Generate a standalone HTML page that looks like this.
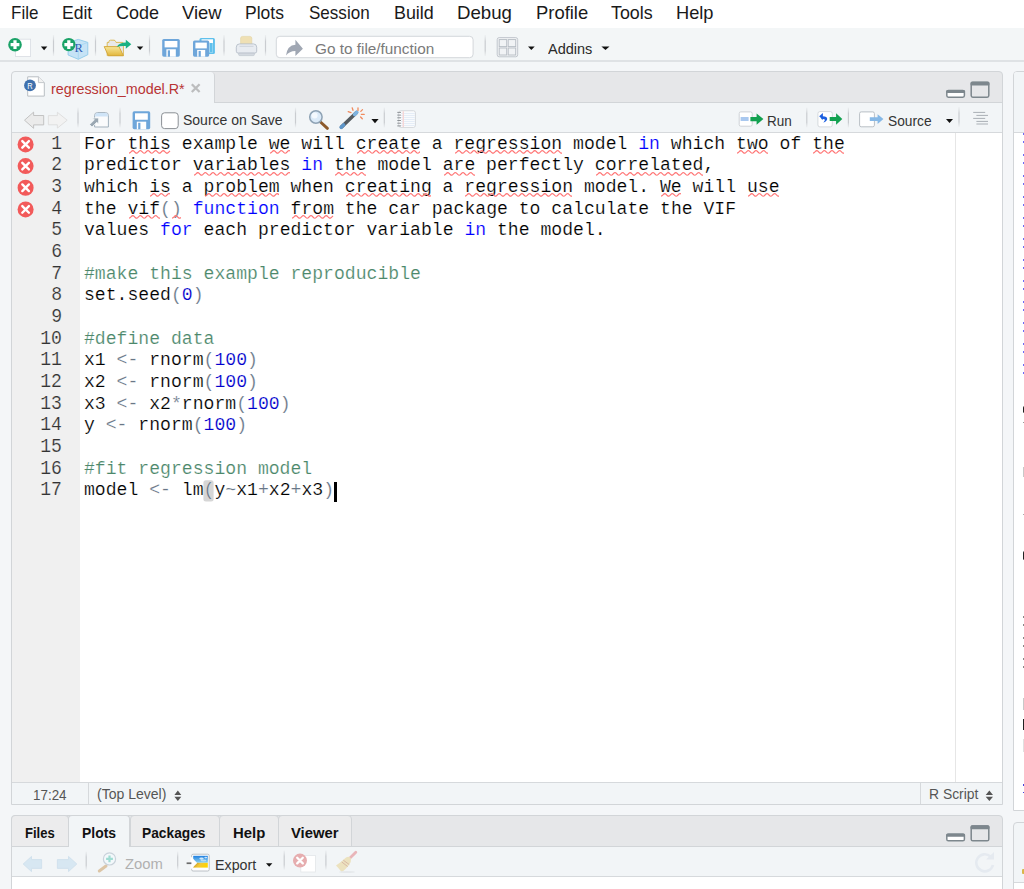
<!DOCTYPE html>
<html><head><meta charset="utf-8">
<style>
*{box-sizing:border-box;margin:0;padding:0}
html,body{width:1024px;height:889px;overflow:hidden;background:#f4f6f8;font-family:"Liberation Sans", sans-serif}
.a{position:absolute}
.t{position:absolute;white-space:pre;line-height:1.2}
.ln{position:absolute;left:84.0px;font-family:"Liberation Mono", monospace;font-size:18.12px;line-height:21.675px;height:21.675px;white-space:pre;color:#000;-webkit-text-stroke:0.18px #fff}
.num{position:absolute;left:20px;width:42px;text-align:right;font-family:"Liberation Mono", monospace;font-size:18.12px;line-height:21.675px;color:#333;transform:scaleY(1.1);-webkit-text-stroke:0.18px #f0f0f0;}
.k{color:#0000ff} .n{color:#0000cd} .c{color:#4c886b} .p{color:#687687}
.sq{position:absolute}
.err{position:absolute}
.sep{position:absolute;width:1px;background:#d3d6d9}
.bd{position:absolute;left:1022.5px;width:2px;height:2px;border-radius:1px;background:#3a3af5}
svg{position:absolute}
</style></head><body>
<!-- menu bar -->
<div class="a" style="left:0;top:0;width:1024px;height:28px;background:#fff"></div>
<div class="t" style="left:11.30px;top:2.48px;font-size:18.4px;color:#1a1a1a;font-weight:normal;transform:scaleX(0.9249);transform-origin:0 0;">File</div><div class="t" style="left:62.20px;top:2.48px;font-size:18.4px;color:#1a1a1a;font-weight:normal;transform:scaleX(0.9546);transform-origin:0 0;">Edit</div><div class="t" style="left:116.00px;top:2.48px;font-size:18.4px;color:#1a1a1a;font-weight:normal;transform:scaleX(0.9778);transform-origin:0 0;">Code</div><div class="t" style="left:181.80px;top:2.48px;font-size:18.4px;color:#1a1a1a;font-weight:normal;transform:scaleX(1.0035);transform-origin:0 0;">View</div><div class="t" style="left:245.00px;top:2.48px;font-size:18.4px;color:#1a1a1a;font-weight:normal;transform:scaleX(0.9526);transform-origin:0 0;">Plots</div><div class="t" style="left:309.00px;top:2.48px;font-size:18.4px;color:#1a1a1a;font-weight:normal;transform:scaleX(0.9267);transform-origin:0 0;">Session</div><div class="t" style="left:393.50px;top:2.48px;font-size:18.4px;color:#1a1a1a;font-weight:normal;transform:scaleX(0.9722);transform-origin:0 0;">Build</div><div class="t" style="left:457.00px;top:2.48px;font-size:18.4px;color:#1a1a1a;font-weight:normal;transform:scaleX(1.0150);transform-origin:0 0;">Debug</div><div class="t" style="left:535.80px;top:2.48px;font-size:18.4px;color:#1a1a1a;font-weight:normal;transform:scaleX(1.0007);transform-origin:0 0;">Profile</div><div class="t" style="left:611.00px;top:2.48px;font-size:18.4px;color:#1a1a1a;font-weight:normal;transform:scaleX(0.9706);transform-origin:0 0;">Tools</div><div class="t" style="left:676.00px;top:2.48px;font-size:18.4px;color:#1a1a1a;font-weight:normal;transform:scaleX(0.9917);transform-origin:0 0;">Help</div>
<!-- main toolbar -->
<div class="a" style="left:0;top:28px;width:1024px;height:32px;background:#f3f6f7"></div>
<div class="a" style="left:0;top:60px;width:1024px;height:2px;background:#dfe2e5"></div>

<!-- editor pane -->
<div class="a" style="left:11px;top:71px;width:992px;height:734px;border:1px solid #d2d5d8;border-radius:4px 4px 0 0;background:#e6e7e9;overflow:hidden">
</div>
<!-- active tab -->
<div class="a" style="left:12px;top:72px;width:203px;height:31px;background:#f2f5f7;border-right:1px solid #d2d5d8;border-radius:4px 4px 0 0"></div>
<div class="a" style="left:215px;top:102px;width:787px;height:1px;background:#d2d5d8"></div>
<!-- editor toolbar -->
<div class="a" style="left:12px;top:103px;width:990px;height:29px;background:#f2f5f7"></div>
<div class="a" style="left:12px;top:132px;width:990px;height:1px;background:#d6d9dc"></div>
<!-- gutter & code -->
<div class="a" style="left:12px;top:133px;width:68px;height:649px;background:#f0f0f0"></div>
<div class="a" style="left:80px;top:133px;width:922px;height:649px;background:#fff"></div>
<div class="a" style="left:955px;top:133px;width:1px;height:649px;background:#e6e6e6"></div>
<!-- status bar -->
<div class="a" style="left:12px;top:782px;width:990px;height:1px;background:#d6d9dc"></div>
<div class="a" style="left:12px;top:783px;width:990px;height:21px;background:#f2f5f7"></div>
<div class="a" style="left:88px;top:783px;width:1px;height:21px;background:#d6d9dc"></div>
<div class="a" style="left:920px;top:783px;width:1px;height:21px;background:#d6d9dc"></div>

<!-- right pane -->
<div class="a" style="left:1013px;top:71px;width:20px;height:740px;border:1px solid #d2d5d8;border-radius:4px 0 0 0;background:#fff"></div>
<div class="a" style="left:1014px;top:72px;width:12px;height:60px;background:#f2f5f7;border-radius:3px 0 0 0"></div>
<div class="a" style="left:1014px;top:132px;width:12px;height:1px;background:#d6d9dc"></div>
<div class="a" style="left:1022.5px;top:406.4px;width:3px;height:7px;background:#222;border-radius:2px"></div>
<div class="a" style="left:1022.5px;top:422px;width:3px;height:1.3px;background:#999"></div>
<div class="a" style="left:1022.8px;top:466.6px;width:2px;height:10px;background:#c8c8c8"></div>
<div class="a" style="left:1022.5px;top:514px;width:3px;height:1.3px;background:#aaa"></div>
<div class="a" style="left:1022.5px;top:550.6px;width:3px;height:9.6px;background:#222;border-radius:2px"></div>
<div class="a" style="left:1023px;top:616.3px;width:2px;height:1.5px;background:#888"></div>
<div class="a" style="left:1023px;top:624px;width:2px;height:1.5px;background:#888"></div>
<div class="a" style="left:1023px;top:637px;width:2px;height:1.5px;background:#888"></div>
<div class="a" style="left:1023px;top:645.4px;width:2px;height:1.5px;background:#888"></div>
<div class="a" style="left:1023px;top:658px;width:2px;height:1.5px;background:#888"></div>
<div class="a" style="left:1023px;top:666.3px;width:2px;height:1.5px;background:#888"></div>
<div class="a" style="left:1022.8px;top:698px;width:2px;height:11.6px;background:#c8c8c8"></div>
<div class="a" style="left:1022.5px;top:719.1px;width:3px;height:11.3px;background:#222"></div>
<div class="a" style="left:1022.8px;top:739.4px;width:2px;height:12.3px;background:#e0e0e0"></div>
<div class="a" style="left:1022.5px;top:784.3px;width:3px;height:1.6px;background:#4444dd"></div>
<div class="a" style="left:1022.5px;top:791.5px;width:3px;height:1.6px;background:#4444dd"></div>
<div class="a" style="left:1013px;top:822px;width:20px;height:80px;border:1px solid #d2d5d8;border-radius:4px 0 0 0;background:#f2f5f7"></div>
<div class="a" style="left:1014px;top:882px;width:12px;height:1px;background:#d6d9dc"></div>
<div class="a" style="left:1014px;top:883px;width:12px;height:10px;background:#fff"></div>
<div class="a" style="left:1022px;top:869px;width:3px;height:4.5px;background:#d9b54a;border-radius:1px"></div>

<!-- bottom pane -->
<div class="a" style="left:11px;top:815px;width:992px;height:90px;border:1px solid #d2d5d8;border-radius:4px 4px 0 0;background:#e6e7e9"></div>
<div class="a" style="left:12px;top:846px;width:990px;height:30px;background:#f2f5f7"></div>
<div class="a" style="left:11px;top:815px;width:58px;height:32px;background:#ececed;border:1px solid #d2d5d8;border-radius:4px 4px 0 0"></div>
<div class="a" style="left:130px;top:815px;width:90px;height:32px;background:#ececed;border:1px solid #d2d5d8;border-radius:4px 4px 0 0"></div>
<div class="a" style="left:219px;top:815px;width:60px;height:32px;background:#ececed;border:1px solid #d2d5d8;border-radius:4px 4px 0 0"></div>
<div class="a" style="left:278px;top:815px;width:74px;height:32px;background:#ececed;border:1px solid #d2d5d8;border-radius:4px 4px 0 0"></div>
<div class="a" style="left:68px;top:815px;width:62px;height:32px;background:#f2f5f7;border:1px solid #d2d5d8;border-bottom:none;border-radius:4px 4px 0 0"></div>
<div class="a" style="left:12px;top:846px;width:56px;height:1px;background:#d2d5d8"></div>
<div class="a" style="left:130px;top:846px;width:872px;height:1px;background:#d2d5d8"></div>
<div class="a" style="left:12px;top:876px;width:990px;height:1px;background:#d6d9dc"></div>
<div class="a" style="left:12px;top:877px;width:990px;height:20px;background:#fff"></div>

<!-- texts -->
<svg style="left:0;top:0" width="1024" height="889" viewBox="0 0 1024 889"><defs><linearGradient id="sg" x1="0" y1="0" x2="0" y2="1"><stop offset="0" stop-color="#d4d7da" stop-opacity="0.2"/><stop offset="0.3" stop-color="#c9ccd0"/><stop offset="0.75" stop-color="#c9ccd0"/><stop offset="1" stop-color="#d4d7da" stop-opacity="0.2"/></linearGradient></defs><rect x="15.5" y="39.2" width="15.1" height="17.2" fill="#fff" stroke="#d9dde3" stroke-width="0.8"/><circle cx="15.0" cy="44.7" r="6.8" fill="#1aa267"/><path d="M10.6 44.7H19.4M15.0 40.300000000000004V49.1" stroke="#fff" stroke-width="3.2"/><path d="M40.9 46.6H47.3L44.099999999999994 50.2Z" fill="#111"/><rect x="52.9" y="35" width="1.2" height="21" fill="url(#sg)"/><path d="M78.3 39.4L87.8 42.4V54.7L78.3 59.3L68.1 55V42.5Z" fill="#c6e3f6" stroke="#8fcbea" stroke-width="0.9"/><path d="M68.1 42.5L78.3 46L87.8 42.4M78.3 46V59.3" fill="none" stroke="#9fd3ef" stroke-width="0.7"/><text x="74.6" y="51.9" font-family="Liberation Serif" font-size="12.5" fill="#2f5db3">R</text><circle cx="68.8" cy="44.6" r="6.7" fill="#1aa267"/><path d="M64.39999999999999 44.6H73.2M68.8 40.2V49.0" stroke="#fff" stroke-width="3.2"/><rect x="94.9" y="35" width="1.2" height="21" fill="url(#sg)"/><path d="M107.2 55.6V42.4H109V41.5Q109 40.2 110.5 40.2H114Q115.2 40.2 115.5 41.4L116 42.4H122.3Q123.4 42.4 123.4 43.5V55.6Z" fill="#e9e9e9" stroke="#d8b44a" stroke-width="0.9"/><defs><linearGradient id="fg" x1="0" y1="0" x2="0" y2="1"><stop offset="0" stop-color="#f7e79a"/><stop offset="1" stop-color="#e2b63c"/></linearGradient></defs><path d="M104.2 46.6H119L123.4 55.7H108.3Z" fill="url(#fg)" stroke="#d3a535" stroke-width="0.9" stroke-linejoin="round"/><path d="M116.8 46.8Q119 42.6 125.8 42.4V39.8L131.3 44.2L125.8 48.8V46.1Q120.5 45.8 116.8 46.8Z" fill="#19b183"/><path d="M136.8 46.6H143.3L140.05 50.1Z" fill="#111"/><rect x="148.9" y="35" width="1.2" height="21" fill="url(#sg)"/><rect x="162.2" y="39.0" width="17.600000000000023" height="17.700000000000003" rx="1.6" fill="#6ea6da"/><rect x="164.6" y="41.0" width="12.800000000000022" height="6.372000000000001" fill="#fff"/><rect x="166.39999999999998" y="49.266000000000005" width="9.400000000000023" height="7.434000000000001" fill="#fff"/><rect x="167.79999999999998" y="50.328" width="2.2" height="6.372000000000001" fill="#6ea6da"/><rect x="199.5" y="37.9" width="15.4" height="16.1" rx="1.5" fill="#5fc0ec"/><rect x="201.5" y="39.3" width="11.5" height="13" fill="#fff"/><rect x="209.5" y="43" width="3.2" height="9" fill="#5fc0ec"/><rect x="193.0" y="40.6" width="16.19999999999999" height="16.1" rx="1.6" fill="#6ea6da"/><rect x="195.4" y="42.6" width="11.399999999999988" height="5.796" fill="#fff"/><rect x="197.2" y="49.938" width="7.999999999999989" height="6.7620000000000005" fill="#fff"/><rect x="198.6" y="50.904" width="2.2" height="5.796" fill="#6ea6da"/><rect x="223.4" y="35" width="1.2" height="21" fill="url(#sg)"/><path d="M240.6 47V38.3Q240.6 36.4 242.5 36.4H249.9Q251.8 36.4 251.8 38.3V47Z" fill="#efe0b4" stroke="#e3d3a2" stroke-width="0.6"/><path d="M236.3 51.2V47.2Q236.3 43.9 239.6 43.9H253.4Q256.7 43.9 256.7 47.2V51.2Q256.7 53.1 254.8 53.1H238.2Q236.3 53.1 236.3 51.2Z" fill="#e8ecf1" stroke="#b5bec8" stroke-width="0.9"/><path d="M239.5 46.3H253.5" stroke="#c9d0d8" stroke-width="0.9"/><path d="M238.6 53.2H254.4V54.5Q254.4 55.6 253.3 55.6H239.7Q238.6 55.6 238.6 54.5Z" fill="#d3d9e0" stroke="#b9c1ca" stroke-width="0.6"/><rect x="264.9" y="35" width="1.2" height="21" fill="url(#sg)"/><rect x="276.3" y="36.3" width="196.8" height="21.4" rx="3.5" fill="#fff" stroke="#d3d7db" stroke-width="1"/><path d="M286 55.6Q287.3 45.3 295.4 44.8V39.7L302.9 48.65L295.4 56.1V51Q289.6 50.9 286 55.6Z" fill="#a0a7b3"/><rect x="484.59999999999997" y="35" width="1.2" height="21" fill="url(#sg)"/><rect x="497.2" y="37.6" width="20.5" height="19.2" rx="2" fill="#f1f3f5" stroke="#bcc2c8" stroke-width="0.9"/><rect x="499.2" y="39.6" width="7.5" height="7" fill="none" stroke="#b6bcc3" stroke-width="0.9"/><rect x="508.2" y="39.6" width="7.5" height="7" fill="none" stroke="#b6bcc3" stroke-width="0.9"/><rect x="499.2" y="48" width="7.5" height="7" fill="none" stroke="#b6bcc3" stroke-width="0.9"/><rect x="508.2" y="48" width="7.5" height="7" fill="none" stroke="#b6bcc3" stroke-width="0.9"/><path d="M528 46.6H534.7L531.35 50.1Z" fill="#111"/><path d="M601.4 46.6H609.5L605.45 50.1Z" fill="#111"/><path d="M27.7 76.8H38.4L44.3 82.6V96.1H27.7Z" fill="#fff" stroke="#b9bec3" stroke-width="1"/><path d="M38.4 76.8V82.6H44.3" fill="#f1f1f1" stroke="#c4c8cc" stroke-width="1"/><circle cx="30" cy="85.4" r="5.9" fill="#3f70ad"/><text x="27.3" y="88.8" font-family="Liberation Sans" font-size="8.8" fill="#fff" transform="translate(27.3 0) scale(0.85 1) translate(-27.3 0)">R</text><path d="M191.8 84.2L199.6 92M199.6 84.2L191.8 92" stroke="#bcbdbe" stroke-width="2.3"/><rect x="946.8" y="90.6" width="17.6" height="6.6" rx="1.6" fill="#fff" stroke="#7d878d" stroke-width="1.5"/><rect x="946.1" y="89.89999999999999" width="19" height="3.2" rx="1.5" fill="#7d878d"/><rect x="971.2" y="82.39999999999999" width="17.6" height="14.8" rx="1.6" fill="none" stroke="#7d878d" stroke-width="1.5"/><rect x="970.5" y="81.6" width="19" height="4" rx="1.5" fill="#7d878d"/><path d="M24.5 120.2L33.6 112.10000000000001V115.5H43.7V124.9H33.6V128.3Z" fill="#ebebeb" stroke="#bdbdbd" stroke-width="0.9" stroke-linejoin="round"/><path d="M67.2 120.2L57.4 112.3V115.60000000000001H48.4V124.8H57.4V128.1Z" fill="#f2f2f2" stroke="#dcdcdc" stroke-width="0.9" stroke-linejoin="round"/><rect x="77.4" y="107.5" width="1.2" height="20.0" fill="url(#sg)"/><path d="M94.6 127V115.5Q94.6 112.6 97.5 112.6H105.5Q108.4 112.6 108.4 115.5V127Z" fill="#fafbfc" stroke="#a3b1bd" stroke-width="1"/><path d="M95.1 116.6V115.5Q95.1 113.1 97.5 113.1H105.5Q107.9 113.1 107.9 115.5V116.6Z" fill="#cfe4f7"/><path d="M89.6 124.6L94.4 119.8L92.6 118H98.6V124L96.8 122.2L92 127Z" fill="#9aa7b2" stroke="#f4f7f9" stroke-width="0.8" stroke-linejoin="round"/><rect x="119.4" y="107.5" width="1.2" height="20.0" fill="url(#sg)"/><rect x="132.6" y="111.3" width="17.599999999999994" height="17.89999999999999" rx="1.6" fill="#6ea6da"/><rect x="135.0" y="113.3" width="12.799999999999994" height="6.443999999999996" fill="#fff"/><rect x="136.79999999999998" y="121.68199999999999" width="9.399999999999995" height="7.517999999999996" fill="#fff"/><rect x="138.2" y="122.75599999999999" width="2.2" height="6.443999999999996" fill="#6ea6da"/><rect x="161.6" y="112.8" width="16.6" height="15.8" rx="3" fill="#fff" stroke="#8a8f94" stroke-width="1"/><rect x="294.9" y="107.5" width="1.2" height="20.0" fill="url(#sg)"/><path d="M320.5 122L327.4 128.3" stroke="#8c5a2c" stroke-width="3" stroke-linecap="round"/><circle cx="315.9" cy="117" r="6.2" fill="#dbeaf8" stroke="#8ea2b4" stroke-width="1.5"/><circle cx="314.6" cy="115.6" r="3" fill="#f4f9fe"/><path d="M341.5 127L356.3 112.7" stroke="#555b60" stroke-width="3.6" stroke-linecap="round"/><path d="M341.2 127.3L343.6 125" stroke="#5d95c9" stroke-width="3.6" stroke-linecap="round"/><path d="M354.6 114.4L356.8 112.2" stroke="#7eb3e0" stroke-width="3.6" stroke-linecap="round"/><path d="M358 107.8V110.4M362.5 109.6L360.8 111.4M364.2 114.4H361.4M362.3 118.8L360.6 117M348.2 111.7L351 112.6M352.2 107.8L353 110.3" stroke="#f08a5d" stroke-width="1.3" stroke-linecap="round"/><path d="M371.4 119H378.6L375.0 123.2Z" fill="#111"/><rect x="383.7" y="107.5" width="1.2" height="20.0" fill="url(#sg)"/><rect x="398.8" y="110.8" width="16.6" height="16.6" rx="2" fill="#fff" stroke="#cfd3d7" stroke-width="0.9"/><path d="M401 113.30H414.8" stroke="#dbe7f4" stroke-width="0.9"/><path d="M401 115.30H414.8" stroke="#dbe7f4" stroke-width="0.9"/><path d="M401 117.30H414.8" stroke="#dbe7f4" stroke-width="0.9"/><path d="M401 119.30H414.8" stroke="#dbe7f4" stroke-width="0.9"/><path d="M401 121.30H414.8" stroke="#dbe7f4" stroke-width="0.9"/><path d="M401 123.30H414.8" stroke="#dbe7f4" stroke-width="0.9"/><path d="M401 125.30H414.8" stroke="#dbe7f4" stroke-width="0.9"/><path d="M397.3 112.40H401" stroke="#8e9397" stroke-width="1"/><path d="M397.3 115.10H401" stroke="#8e9397" stroke-width="1"/><path d="M397.3 117.80H401" stroke="#8e9397" stroke-width="1"/><path d="M397.3 120.50H401" stroke="#8e9397" stroke-width="1"/><path d="M397.3 123.20H401" stroke="#8e9397" stroke-width="1"/><path d="M397.3 125.90H401" stroke="#8e9397" stroke-width="1"/><path d="M403.3 111.3V127" stroke="#f6d6d6" stroke-width="1.4"/><rect x="739.2" y="111.9" width="13" height="14.3" rx="1.6" fill="#fff" stroke="#c9ced3" stroke-width="0.9"/><rect x="740.6" y="117" width="8" height="4" fill="#a9c8ef"/><path d="M763.4 119.1L756.6 113.5V117.05H750.4V121.14999999999999H756.6V124.69999999999999Z" fill="#12a150" stroke="none" stroke-width="0.9" stroke-linejoin="round"/><rect x="806.1999999999999" y="107.5" width="1.2" height="20.0" fill="url(#sg)"/><rect x="817.9" y="111.6" width="14.4" height="15.3" rx="2" fill="#fff" stroke="#d5d9dd" stroke-width="1"/><path d="M821.5 116.4Q827.2 116 827.2 119Q827 121.3 823.3 122.6Q825.3 120.8 824.8 119.6Q824.3 118.8 821.5 119.2Z" fill="#1b5fe0"/><path d="M819.2 116.3L822.9 112.9V119.9Z" fill="#1b5fe0"/><path d="M842.3 119.0L836.1 113.2V116.95H829.7V121.05H836.1V124.8Z" fill="#12a150" stroke="none" stroke-width="0.9" stroke-linejoin="round"/><rect x="847.8" y="107.5" width="1.2" height="20.0" fill="url(#sg)"/><rect x="859.6" y="111.9" width="14.8" height="14.9" rx="1.6" fill="#fff" stroke="#b9bfc5" stroke-width="1"/><path d="M883.4 119.1L877.6 114.19999999999999V117.14999999999999H869.8V121.05H877.6V124.0Z" fill="#86b8e6" stroke="none" stroke-width="0.9" stroke-linejoin="round"/><path d="M946 119H953L949.5 123Z" fill="#111"/><rect x="958.4" y="107" width="1.2" height="20" fill="url(#sg)"/><path d="M973.2 112.4H985.2M976.4 115.4H988M973.2 118.4H985.2M976.4 121.4H988M976.4 124H988" stroke="#a9afb5" stroke-width="1"/><circle cx="25.6" cy="144.40" r="8" fill="#f25a5a"/><path d="M22.3 141.10L28.9 147.70M28.9 141.10L22.3 147.70" stroke="#fff" stroke-width="2.4" stroke-linecap="round"/><circle cx="25.6" cy="166.08" r="8" fill="#f25a5a"/><path d="M22.3 162.78L28.9 169.38M28.9 162.78L22.3 169.38" stroke="#fff" stroke-width="2.4" stroke-linecap="round"/><circle cx="25.6" cy="187.75" r="8" fill="#f25a5a"/><path d="M22.3 184.45L28.9 191.05M28.9 184.45L22.3 191.05" stroke="#fff" stroke-width="2.4" stroke-linecap="round"/><circle cx="25.6" cy="209.43" r="8" fill="#f25a5a"/><path d="M22.3 206.12L28.9 212.73M28.9 206.12L22.3 212.73" stroke="#fff" stroke-width="2.4" stroke-linecap="round"/><rect x="203.4" y="480.3" width="10.2" height="21.1" rx="2.5" fill="#d6d6d6"/><path d="M174.4 795H181.3L177.85000000000002 790.6Z M174.4 796.7H181.3L177.85000000000002 801Z" fill="#555"/><path d="M985.7 795H993L989.35 790.6Z M985.7 796.7H993L989.35 801Z" fill="#555"/><rect x="946.8" y="834.1999999999999" width="17.6" height="6.6" rx="1.6" fill="#fff" stroke="#7d878d" stroke-width="1.5"/><rect x="946.1" y="833.5" width="19" height="3.2" rx="1.5" fill="#7d878d"/><rect x="971.2" y="826.0" width="17.6" height="14.8" rx="1.6" fill="none" stroke="#7d878d" stroke-width="1.5"/><rect x="970.5" y="825.1999999999999" width="19" height="4" rx="1.5" fill="#7d878d"/><path d="M23.2 864L31.5 856.4V859.6H41.6V868.4H31.5V871.6Z" fill="#d7e7f2" stroke="#cfe0ec" stroke-width="0.9" stroke-linejoin="round"/><path d="M76.8 864L68.5 856.4V859.6H57.4V868.4H68.5V871.6Z" fill="#d7e7f2" stroke="#cfe0ec" stroke-width="0.9" stroke-linejoin="round"/><rect x="85.60000000000001" y="851.5" width="1.2" height="18.5" fill="url(#sg)"/><path d="M106 866L99.3 871" stroke="#dcc5a6" stroke-width="3" stroke-linecap="round"/><circle cx="109.5" cy="858.9" r="6.1" fill="#f3f8fb" stroke="#c9d2da" stroke-width="1.2"/><path d="M109.5 855.5V862.3M106.1 858.9H112.9" stroke="#9fdcd2" stroke-width="2.2"/><rect x="177.1" y="851.5" width="1.2" height="18.5" fill="url(#sg)"/><rect x="191.6" y="854.2" width="17.6" height="16.8" rx="1.5" fill="#fff" stroke="#b4bac0" stroke-width="0.9"/><defs><linearGradient id="sky" x1="0" y1="0" x2="0" y2="1"><stop offset="0" stop-color="#1f7fe0"/><stop offset="1" stop-color="#8fd3f0"/></linearGradient><linearGradient id="fld" x1="0" y1="0" x2="1" y2="0.3"><stop offset="0" stop-color="#b08a20"/><stop offset="0.5" stop-color="#f3c83a"/><stop offset="1" stop-color="#ffd400"/></linearGradient></defs><rect x="193.2" y="855.8" width="14.6" height="7" fill="url(#sky)"/><rect x="193.2" y="862.8" width="14.6" height="4.8" fill="url(#fld)"/><ellipse cx="201.5" cy="858.6" rx="2.2" ry="1.1" fill="#eaf4fb" opacity="0.85"/><ellipse cx="205.8" cy="857.6" rx="1.5" ry="0.8" fill="#eaf4fb" opacity="0.8"/><ellipse cx="203.5" cy="860.5" rx="3" ry="0.9" fill="#d8ecf8" opacity="0.7"/><path d="M190.6 856.2L197.2 863L190.6 869.8Z" fill="#fff"/><rect x="186.6" y="862.4" width="4.8" height="1.7" fill="#6b6b6b"/><path d="M266 863.3H272.4L269.2 866.8Z" fill="#111"/><rect x="283.59999999999997" y="850.4" width="1.2" height="19.300000000000068" fill="url(#sg)"/><rect x="300.8" y="855.4" width="14.6" height="16.6" fill="#fff" stroke="#e3e6e9" stroke-width="0.8"/><circle cx="300" cy="860.6" r="7" fill="#e6adaf"/><path d="M297.2 857.8L302.8 863.4M302.8 857.8L297.2 863.4" stroke="#fff" stroke-width="2.3" stroke-linecap="round"/><rect x="325.29999999999995" y="850.4" width="1.2" height="19.300000000000068" fill="url(#sg)"/><path d="M349.5 858.5L355.8 852.3" stroke="#e9b5b9" stroke-width="2.8" stroke-linecap="round"/><path d="M336 865.5Q341 862 346 857.4Q349.5 855.6 351 858.5Q351.5 861.5 349 865Q346 869 341.8 872.2Q338.5 868 336 865.5Z" fill="#ece2bf"/><path d="M343.3 860.2L349.2 864.5M341.8 862L347.6 866.5" stroke="#d9b9a6" stroke-width="1"/><ellipse cx="347" cy="872" rx="8" ry="1" fill="#e6e9ec"/><path d="M990.5 856.5A8.5 8.5 0 1 0 993 865" fill="none" stroke="#e5eaf0" stroke-width="2.6"/><path d="M986 859.5H994V852Z" fill="#e5eaf0"/></svg>
<div class="t" style="left:314.70px;top:40.66px;font-size:14.2px;color:#7a7a7a;font-weight:normal;transform:scaleX(1.0799);transform-origin:0 0;">Go to file/function</div><div class="t" style="left:547.60px;top:41.48px;font-size:14.5px;color:#2a2a2a;font-weight:normal;transform:scaleX(1.0007);transform-origin:0 0;">Addins</div><div class="t" style="left:50.60px;top:80.77px;font-size:14.4px;color:#b83434;font-weight:normal;transform:scaleX(0.9948);transform-origin:0 0;">regression_model.R*</div><div class="t" style="left:183.40px;top:111.95px;font-size:14px;color:#333;font-weight:normal;transform:scaleX(0.9999);transform-origin:0 0;">Source on Save</div><div class="t" style="left:767.00px;top:113.28px;font-size:14.5px;color:#333;font-weight:normal;transform:scaleX(0.9321);transform-origin:0 0;">Run</div><div class="t" style="left:887.90px;top:113.28px;font-size:14.5px;color:#333;font-weight:normal;transform:scaleX(0.9485);transform-origin:0 0;">Source</div><div class="t" style="left:32.80px;top:785.80px;font-size:15px;color:#555;font-weight:normal;transform:scaleX(0.8942);transform-origin:0 0;">17:24</div><div class="t" style="left:96.70px;top:785.99px;font-size:14.8px;color:#555;font-weight:normal;transform:scaleX(0.9469);transform-origin:0 0;">(Top Level)</div><div class="t" style="left:928.70px;top:785.89px;font-size:14.8px;color:#555;font-weight:normal;transform:scaleX(0.9389);transform-origin:0 0;">R Script</div><div class="t" style="left:25.10px;top:824.75px;font-size:14px;color:#111;font-weight:bold;transform:scaleX(0.9305);transform-origin:0 0;">Files</div><div class="t" style="left:81.70px;top:824.75px;font-size:14px;color:#111;font-weight:bold;transform:scaleX(0.9933);transform-origin:0 0;">Plots</div><div class="t" style="left:142.30px;top:824.75px;font-size:14px;color:#111;font-weight:bold;transform:scaleX(0.9828);transform-origin:0 0;">Packages</div><div class="t" style="left:232.50px;top:824.75px;font-size:14px;color:#111;font-weight:bold;transform:scaleX(1.0624);transform-origin:0 0;">Help</div><div class="t" style="left:291.40px;top:824.75px;font-size:14px;color:#111;font-weight:bold;transform:scaleX(1.0586);transform-origin:0 0;">Viewer</div><div class="t" style="left:125.20px;top:856.49px;font-size:14.8px;color:#b0b0b0;font-weight:normal;transform:scaleX(1.0023);transform-origin:0 0;">Zoom</div><div class="t" style="left:214.70px;top:856.97px;font-size:14.3px;color:#333;font-weight:normal;transform:scaleX(0.9969);transform-origin:0 0;">Export</div>
<!-- code -->
<div class="a" style="left:334.4px;top:482px;width:2.4px;height:19.5px;background:#000"></div>
<div class="ln" style="top:133.50px">For this example we will create a regression model <span class="k">in</span> which two of the</div><div class="num" style="top:133.50px">1</div><div class="ln" style="top:155.18px">predictor variables <span class="k">in</span> the model are perfectly correlated,</div><div class="num" style="top:155.18px">2</div><div class="ln" style="top:176.85px">which is a problem when creating a regression model. We will use</div><div class="num" style="top:176.85px">3</div><div class="ln" style="top:198.53px">the vif<span class="p">()</span> <span class="k">function</span> from the car package to calculate the VIF</div><div class="num" style="top:198.53px">4</div><div class="ln" style="top:220.20px">values <span class="k">for</span> each predictor variable <span class="k">in</span> the model.</div><div class="num" style="top:220.20px">5</div><div class="ln" style="top:241.88px"></div><div class="num" style="top:241.88px">6</div><div class="ln" style="top:263.55px"><span class="c">#make this example reproducible</span></div><div class="num" style="top:263.55px">7</div><div class="ln" style="top:285.23px">set.seed<span class="p">(</span><span class="n">0</span><span class="p">)</span></div><div class="num" style="top:285.23px">8</div><div class="ln" style="top:306.90px"></div><div class="num" style="top:306.90px">9</div><div class="ln" style="top:328.58px"><span class="c">#define data</span></div><div class="num" style="top:328.58px">10</div><div class="ln" style="top:350.25px">x1 <span class="p">&lt;-</span> rnorm<span class="p">(</span><span class="n">100</span><span class="p">)</span></div><div class="num" style="top:350.25px">11</div><div class="ln" style="top:371.93px">x2 <span class="p">&lt;-</span> rnorm<span class="p">(</span><span class="n">100</span><span class="p">)</span></div><div class="num" style="top:371.93px">12</div><div class="ln" style="top:393.60px">x3 <span class="p">&lt;-</span> x2<span class="p">*</span>rnorm<span class="p">(</span><span class="n">100</span><span class="p">)</span></div><div class="num" style="top:393.60px">13</div><div class="ln" style="top:415.28px">y <span class="p">&lt;-</span> rnorm<span class="p">(</span><span class="n">100</span><span class="p">)</span></div><div class="num" style="top:415.28px">14</div><div class="ln" style="top:436.95px"></div><div class="num" style="top:436.95px">15</div><div class="ln" style="top:458.62px"><span class="c">#fit regression model</span></div><div class="num" style="top:458.62px">16</div><div class="ln" style="top:480.30px">model <span class="p">&lt;-</span> lm<span class="p">(</span>y<span class="p">~</span>x1<span class="p">+</span>x2<span class="p">+</span>x3<span class="p">)</span></div><div class="num" style="top:480.30px">17</div>
<svg class="sq" style="left:128.5px;top:150.1px" width="42.0" height="4.5"><path d="M0.00 3.25 L1.00 2.81 L2.00 1.79 L3.00 0.83 L4.00 0.57 L5.00 1.16 L6.00 2.23 L7.00 3.09 L8.00 3.18 L9.00 2.44 L10.00 1.36 L11.00 0.62 L12.00 0.71 L13.00 1.57 L14.00 2.64 L15.00 3.23 L16.00 2.97 L17.00 2.01 L18.00 0.99 L19.00 0.55 L20.00 0.99 L21.00 2.01 L22.00 2.97 L23.00 3.23 L24.00 2.64 L25.00 1.57 L26.00 0.71 L27.00 0.62 L28.00 1.36 L29.00 2.44 L30.00 3.18 L31.00 3.09 L32.00 2.23 L33.00 1.16 L34.00 0.57 L35.00 0.83 L36.00 1.79 L37.00 2.81 L38.00 3.25 L39.00 2.81 L40.00 1.79 L41.00 0.83" fill="none" stroke="#ff7474" stroke-width="1.15"/></svg><svg class="sq" style="left:269.8px;top:150.1px" width="20.2" height="4.5"><path d="M0.00 3.25 L1.00 2.81 L2.00 1.79 L3.00 0.83 L4.00 0.57 L5.00 1.16 L6.00 2.23 L7.00 3.09 L8.00 3.18 L9.00 2.44 L10.00 1.36 L11.00 0.62 L12.00 0.71 L13.00 1.57 L14.00 2.64 L15.00 3.23 L16.00 2.97 L17.00 2.01 L18.00 0.99 L19.00 0.55 L20.00 0.99" fill="none" stroke="#ff7474" stroke-width="1.15"/></svg><svg class="sq" style="left:356.8px;top:150.1px" width="63.7" height="4.5"><path d="M0.00 3.25 L1.00 2.81 L2.00 1.79 L3.00 0.83 L4.00 0.57 L5.00 1.16 L6.00 2.23 L7.00 3.09 L8.00 3.18 L9.00 2.44 L10.00 1.36 L11.00 0.62 L12.00 0.71 L13.00 1.57 L14.00 2.64 L15.00 3.23 L16.00 2.97 L17.00 2.01 L18.00 0.99 L19.00 0.55 L20.00 0.99 L21.00 2.01 L22.00 2.97 L23.00 3.23 L24.00 2.64 L25.00 1.57 L26.00 0.71 L27.00 0.62 L28.00 1.36 L29.00 2.44 L30.00 3.18 L31.00 3.09 L32.00 2.23 L33.00 1.16 L34.00 0.57 L35.00 0.83 L36.00 1.79 L37.00 2.81 L38.00 3.25 L39.00 2.81 L40.00 1.79 L41.00 0.83 L42.00 0.57 L43.00 1.16 L44.00 2.23 L45.00 3.09 L46.00 3.18 L47.00 2.44 L48.00 1.36 L49.00 0.62 L50.00 0.71 L51.00 1.57 L52.00 2.64 L53.00 3.23 L54.00 2.97 L55.00 2.01 L56.00 0.99 L57.00 0.55 L58.00 0.99 L59.00 2.01 L60.00 2.97 L61.00 3.23 L62.00 2.64 L63.00 1.57" fill="none" stroke="#ff7474" stroke-width="1.15"/></svg><svg class="sq" style="left:454.6px;top:150.1px" width="107.2" height="4.5"><path d="M0.00 3.25 L1.00 2.81 L2.00 1.79 L3.00 0.83 L4.00 0.57 L5.00 1.16 L6.00 2.23 L7.00 3.09 L8.00 3.18 L9.00 2.44 L10.00 1.36 L11.00 0.62 L12.00 0.71 L13.00 1.57 L14.00 2.64 L15.00 3.23 L16.00 2.97 L17.00 2.01 L18.00 0.99 L19.00 0.55 L20.00 0.99 L21.00 2.01 L22.00 2.97 L23.00 3.23 L24.00 2.64 L25.00 1.57 L26.00 0.71 L27.00 0.62 L28.00 1.36 L29.00 2.44 L30.00 3.18 L31.00 3.09 L32.00 2.23 L33.00 1.16 L34.00 0.57 L35.00 0.83 L36.00 1.79 L37.00 2.81 L38.00 3.25 L39.00 2.81 L40.00 1.79 L41.00 0.83 L42.00 0.57 L43.00 1.16 L44.00 2.23 L45.00 3.09 L46.00 3.18 L47.00 2.44 L48.00 1.36 L49.00 0.62 L50.00 0.71 L51.00 1.57 L52.00 2.64 L53.00 3.23 L54.00 2.97 L55.00 2.01 L56.00 0.99 L57.00 0.55 L58.00 0.99 L59.00 2.01 L60.00 2.97 L61.00 3.23 L62.00 2.64 L63.00 1.57 L64.00 0.71 L65.00 0.62 L66.00 1.36 L67.00 2.44 L68.00 3.18 L69.00 3.09 L70.00 2.23 L71.00 1.16 L72.00 0.57 L73.00 0.83 L74.00 1.79 L75.00 2.81 L76.00 3.25 L77.00 2.81 L78.00 1.79 L79.00 0.83 L80.00 0.57 L81.00 1.16 L82.00 2.23 L83.00 3.09 L84.00 3.18 L85.00 2.44 L86.00 1.36 L87.00 0.62 L88.00 0.71 L89.00 1.57 L90.00 2.64 L91.00 3.23 L92.00 2.97 L93.00 2.01 L94.00 0.99 L95.00 0.55 L96.00 0.99 L97.00 2.01 L98.00 2.97 L99.00 3.23 L100.00 2.64 L101.00 1.57 L102.00 0.71 L103.00 0.62 L104.00 1.36 L105.00 2.44 L106.00 3.18 L107.00 3.09" fill="none" stroke="#ff7474" stroke-width="1.15"/></svg><svg class="sq" style="left:737.2px;top:150.1px" width="31.1" height="4.5"><path d="M0.00 3.25 L1.00 2.81 L2.00 1.79 L3.00 0.83 L4.00 0.57 L5.00 1.16 L6.00 2.23 L7.00 3.09 L8.00 3.18 L9.00 2.44 L10.00 1.36 L11.00 0.62 L12.00 0.71 L13.00 1.57 L14.00 2.64 L15.00 3.23 L16.00 2.97 L17.00 2.01 L18.00 0.99 L19.00 0.55 L20.00 0.99 L21.00 2.01 L22.00 2.97 L23.00 3.23 L24.00 2.64 L25.00 1.57 L26.00 0.71 L27.00 0.62 L28.00 1.36 L29.00 2.44 L30.00 3.18 L31.00 3.09" fill="none" stroke="#ff7474" stroke-width="1.15"/></svg><svg class="sq" style="left:813.3px;top:150.1px" width="31.1" height="4.5"><path d="M0.00 3.25 L1.00 2.81 L2.00 1.79 L3.00 0.83 L4.00 0.57 L5.00 1.16 L6.00 2.23 L7.00 3.09 L8.00 3.18 L9.00 2.44 L10.00 1.36 L11.00 0.62 L12.00 0.71 L13.00 1.57 L14.00 2.64 L15.00 3.23 L16.00 2.97 L17.00 2.01 L18.00 0.99 L19.00 0.55 L20.00 0.99 L21.00 2.01 L22.00 2.97 L23.00 3.23 L24.00 2.64 L25.00 1.57 L26.00 0.71 L27.00 0.62 L28.00 1.36 L29.00 2.44 L30.00 3.18 L31.00 3.09" fill="none" stroke="#ff7474" stroke-width="1.15"/></svg><svg class="sq" style="left:193.7px;top:171.8px" width="96.3" height="4.5"><path d="M0.00 3.25 L1.00 2.81 L2.00 1.79 L3.00 0.83 L4.00 0.57 L5.00 1.16 L6.00 2.23 L7.00 3.09 L8.00 3.18 L9.00 2.44 L10.00 1.36 L11.00 0.62 L12.00 0.71 L13.00 1.57 L14.00 2.64 L15.00 3.23 L16.00 2.97 L17.00 2.01 L18.00 0.99 L19.00 0.55 L20.00 0.99 L21.00 2.01 L22.00 2.97 L23.00 3.23 L24.00 2.64 L25.00 1.57 L26.00 0.71 L27.00 0.62 L28.00 1.36 L29.00 2.44 L30.00 3.18 L31.00 3.09 L32.00 2.23 L33.00 1.16 L34.00 0.57 L35.00 0.83 L36.00 1.79 L37.00 2.81 L38.00 3.25 L39.00 2.81 L40.00 1.79 L41.00 0.83 L42.00 0.57 L43.00 1.16 L44.00 2.23 L45.00 3.09 L46.00 3.18 L47.00 2.44 L48.00 1.36 L49.00 0.62 L50.00 0.71 L51.00 1.57 L52.00 2.64 L53.00 3.23 L54.00 2.97 L55.00 2.01 L56.00 0.99 L57.00 0.55 L58.00 0.99 L59.00 2.01 L60.00 2.97 L61.00 3.23 L62.00 2.64 L63.00 1.57 L64.00 0.71 L65.00 0.62 L66.00 1.36 L67.00 2.44 L68.00 3.18 L69.00 3.09 L70.00 2.23 L71.00 1.16 L72.00 0.57 L73.00 0.83 L74.00 1.79 L75.00 2.81 L76.00 3.25 L77.00 2.81 L78.00 1.79 L79.00 0.83 L80.00 0.57 L81.00 1.16 L82.00 2.23 L83.00 3.09 L84.00 3.18 L85.00 2.44 L86.00 1.36 L87.00 0.62 L88.00 0.71 L89.00 1.57 L90.00 2.64 L91.00 3.23 L92.00 2.97 L93.00 2.01 L94.00 0.99 L95.00 0.55 L96.00 0.99" fill="none" stroke="#ff7474" stroke-width="1.15"/></svg><svg class="sq" style="left:335.0px;top:171.8px" width="31.1" height="4.5"><path d="M0.00 3.25 L1.00 2.81 L2.00 1.79 L3.00 0.83 L4.00 0.57 L5.00 1.16 L6.00 2.23 L7.00 3.09 L8.00 3.18 L9.00 2.44 L10.00 1.36 L11.00 0.62 L12.00 0.71 L13.00 1.57 L14.00 2.64 L15.00 3.23 L16.00 2.97 L17.00 2.01 L18.00 0.99 L19.00 0.55 L20.00 0.99 L21.00 2.01 L22.00 2.97 L23.00 3.23 L24.00 2.64 L25.00 1.57 L26.00 0.71 L27.00 0.62 L28.00 1.36 L29.00 2.44 L30.00 3.18 L31.00 3.09" fill="none" stroke="#ff7474" stroke-width="1.15"/></svg><svg class="sq" style="left:443.7px;top:171.8px" width="31.1" height="4.5"><path d="M0.00 3.25 L1.00 2.81 L2.00 1.79 L3.00 0.83 L4.00 0.57 L5.00 1.16 L6.00 2.23 L7.00 3.09 L8.00 3.18 L9.00 2.44 L10.00 1.36 L11.00 0.62 L12.00 0.71 L13.00 1.57 L14.00 2.64 L15.00 3.23 L16.00 2.97 L17.00 2.01 L18.00 0.99 L19.00 0.55 L20.00 0.99 L21.00 2.01 L22.00 2.97 L23.00 3.23 L24.00 2.64 L25.00 1.57 L26.00 0.71 L27.00 0.62 L28.00 1.36 L29.00 2.44 L30.00 3.18 L31.00 3.09" fill="none" stroke="#ff7474" stroke-width="1.15"/></svg><svg class="sq" style="left:595.9px;top:171.8px" width="107.2" height="4.5"><path d="M0.00 3.25 L1.00 2.81 L2.00 1.79 L3.00 0.83 L4.00 0.57 L5.00 1.16 L6.00 2.23 L7.00 3.09 L8.00 3.18 L9.00 2.44 L10.00 1.36 L11.00 0.62 L12.00 0.71 L13.00 1.57 L14.00 2.64 L15.00 3.23 L16.00 2.97 L17.00 2.01 L18.00 0.99 L19.00 0.55 L20.00 0.99 L21.00 2.01 L22.00 2.97 L23.00 3.23 L24.00 2.64 L25.00 1.57 L26.00 0.71 L27.00 0.62 L28.00 1.36 L29.00 2.44 L30.00 3.18 L31.00 3.09 L32.00 2.23 L33.00 1.16 L34.00 0.57 L35.00 0.83 L36.00 1.79 L37.00 2.81 L38.00 3.25 L39.00 2.81 L40.00 1.79 L41.00 0.83 L42.00 0.57 L43.00 1.16 L44.00 2.23 L45.00 3.09 L46.00 3.18 L47.00 2.44 L48.00 1.36 L49.00 0.62 L50.00 0.71 L51.00 1.57 L52.00 2.64 L53.00 3.23 L54.00 2.97 L55.00 2.01 L56.00 0.99 L57.00 0.55 L58.00 0.99 L59.00 2.01 L60.00 2.97 L61.00 3.23 L62.00 2.64 L63.00 1.57 L64.00 0.71 L65.00 0.62 L66.00 1.36 L67.00 2.44 L68.00 3.18 L69.00 3.09 L70.00 2.23 L71.00 1.16 L72.00 0.57 L73.00 0.83 L74.00 1.79 L75.00 2.81 L76.00 3.25 L77.00 2.81 L78.00 1.79 L79.00 0.83 L80.00 0.57 L81.00 1.16 L82.00 2.23 L83.00 3.09 L84.00 3.18 L85.00 2.44 L86.00 1.36 L87.00 0.62 L88.00 0.71 L89.00 1.57 L90.00 2.64 L91.00 3.23 L92.00 2.97 L93.00 2.01 L94.00 0.99 L95.00 0.55 L96.00 0.99 L97.00 2.01 L98.00 2.97 L99.00 3.23 L100.00 2.64 L101.00 1.57 L102.00 0.71 L103.00 0.62 L104.00 1.36 L105.00 2.44 L106.00 3.18 L107.00 3.09" fill="none" stroke="#ff7474" stroke-width="1.15"/></svg><svg class="sq" style="left:150.2px;top:193.4px" width="20.2" height="4.5"><path d="M0.00 3.25 L1.00 2.81 L2.00 1.79 L3.00 0.83 L4.00 0.57 L5.00 1.16 L6.00 2.23 L7.00 3.09 L8.00 3.18 L9.00 2.44 L10.00 1.36 L11.00 0.62 L12.00 0.71 L13.00 1.57 L14.00 2.64 L15.00 3.23 L16.00 2.97 L17.00 2.01 L18.00 0.99 L19.00 0.55 L20.00 0.99" fill="none" stroke="#ff7474" stroke-width="1.15"/></svg><svg class="sq" style="left:204.6px;top:193.4px" width="74.6" height="4.5"><path d="M0.00 3.25 L1.00 2.81 L2.00 1.79 L3.00 0.83 L4.00 0.57 L5.00 1.16 L6.00 2.23 L7.00 3.09 L8.00 3.18 L9.00 2.44 L10.00 1.36 L11.00 0.62 L12.00 0.71 L13.00 1.57 L14.00 2.64 L15.00 3.23 L16.00 2.97 L17.00 2.01 L18.00 0.99 L19.00 0.55 L20.00 0.99 L21.00 2.01 L22.00 2.97 L23.00 3.23 L24.00 2.64 L25.00 1.57 L26.00 0.71 L27.00 0.62 L28.00 1.36 L29.00 2.44 L30.00 3.18 L31.00 3.09 L32.00 2.23 L33.00 1.16 L34.00 0.57 L35.00 0.83 L36.00 1.79 L37.00 2.81 L38.00 3.25 L39.00 2.81 L40.00 1.79 L41.00 0.83 L42.00 0.57 L43.00 1.16 L44.00 2.23 L45.00 3.09 L46.00 3.18 L47.00 2.44 L48.00 1.36 L49.00 0.62 L50.00 0.71 L51.00 1.57 L52.00 2.64 L53.00 3.23 L54.00 2.97 L55.00 2.01 L56.00 0.99 L57.00 0.55 L58.00 0.99 L59.00 2.01 L60.00 2.97 L61.00 3.23 L62.00 2.64 L63.00 1.57 L64.00 0.71 L65.00 0.62 L66.00 1.36 L67.00 2.44 L68.00 3.18 L69.00 3.09 L70.00 2.23 L71.00 1.16 L72.00 0.57 L73.00 0.83 L74.00 1.79" fill="none" stroke="#ff7474" stroke-width="1.15"/></svg><svg class="sq" style="left:345.9px;top:193.4px" width="85.5" height="4.5"><path d="M0.00 3.25 L1.00 2.81 L2.00 1.79 L3.00 0.83 L4.00 0.57 L5.00 1.16 L6.00 2.23 L7.00 3.09 L8.00 3.18 L9.00 2.44 L10.00 1.36 L11.00 0.62 L12.00 0.71 L13.00 1.57 L14.00 2.64 L15.00 3.23 L16.00 2.97 L17.00 2.01 L18.00 0.99 L19.00 0.55 L20.00 0.99 L21.00 2.01 L22.00 2.97 L23.00 3.23 L24.00 2.64 L25.00 1.57 L26.00 0.71 L27.00 0.62 L28.00 1.36 L29.00 2.44 L30.00 3.18 L31.00 3.09 L32.00 2.23 L33.00 1.16 L34.00 0.57 L35.00 0.83 L36.00 1.79 L37.00 2.81 L38.00 3.25 L39.00 2.81 L40.00 1.79 L41.00 0.83 L42.00 0.57 L43.00 1.16 L44.00 2.23 L45.00 3.09 L46.00 3.18 L47.00 2.44 L48.00 1.36 L49.00 0.62 L50.00 0.71 L51.00 1.57 L52.00 2.64 L53.00 3.23 L54.00 2.97 L55.00 2.01 L56.00 0.99 L57.00 0.55 L58.00 0.99 L59.00 2.01 L60.00 2.97 L61.00 3.23 L62.00 2.64 L63.00 1.57 L64.00 0.71 L65.00 0.62 L66.00 1.36 L67.00 2.44 L68.00 3.18 L69.00 3.09 L70.00 2.23 L71.00 1.16 L72.00 0.57 L73.00 0.83 L74.00 1.79 L75.00 2.81 L76.00 3.25 L77.00 2.81 L78.00 1.79 L79.00 0.83 L80.00 0.57 L81.00 1.16 L82.00 2.23 L83.00 3.09 L84.00 3.18 L85.00 2.44" fill="none" stroke="#ff7474" stroke-width="1.15"/></svg><svg class="sq" style="left:465.4px;top:193.4px" width="107.2" height="4.5"><path d="M0.00 3.25 L1.00 2.81 L2.00 1.79 L3.00 0.83 L4.00 0.57 L5.00 1.16 L6.00 2.23 L7.00 3.09 L8.00 3.18 L9.00 2.44 L10.00 1.36 L11.00 0.62 L12.00 0.71 L13.00 1.57 L14.00 2.64 L15.00 3.23 L16.00 2.97 L17.00 2.01 L18.00 0.99 L19.00 0.55 L20.00 0.99 L21.00 2.01 L22.00 2.97 L23.00 3.23 L24.00 2.64 L25.00 1.57 L26.00 0.71 L27.00 0.62 L28.00 1.36 L29.00 2.44 L30.00 3.18 L31.00 3.09 L32.00 2.23 L33.00 1.16 L34.00 0.57 L35.00 0.83 L36.00 1.79 L37.00 2.81 L38.00 3.25 L39.00 2.81 L40.00 1.79 L41.00 0.83 L42.00 0.57 L43.00 1.16 L44.00 2.23 L45.00 3.09 L46.00 3.18 L47.00 2.44 L48.00 1.36 L49.00 0.62 L50.00 0.71 L51.00 1.57 L52.00 2.64 L53.00 3.23 L54.00 2.97 L55.00 2.01 L56.00 0.99 L57.00 0.55 L58.00 0.99 L59.00 2.01 L60.00 2.97 L61.00 3.23 L62.00 2.64 L63.00 1.57 L64.00 0.71 L65.00 0.62 L66.00 1.36 L67.00 2.44 L68.00 3.18 L69.00 3.09 L70.00 2.23 L71.00 1.16 L72.00 0.57 L73.00 0.83 L74.00 1.79 L75.00 2.81 L76.00 3.25 L77.00 2.81 L78.00 1.79 L79.00 0.83 L80.00 0.57 L81.00 1.16 L82.00 2.23 L83.00 3.09 L84.00 3.18 L85.00 2.44 L86.00 1.36 L87.00 0.62 L88.00 0.71 L89.00 1.57 L90.00 2.64 L91.00 3.23 L92.00 2.97 L93.00 2.01 L94.00 0.99 L95.00 0.55 L96.00 0.99 L97.00 2.01 L98.00 2.97 L99.00 3.23 L100.00 2.64 L101.00 1.57 L102.00 0.71 L103.00 0.62 L104.00 1.36 L105.00 2.44 L106.00 3.18 L107.00 3.09" fill="none" stroke="#ff7474" stroke-width="1.15"/></svg><svg class="sq" style="left:661.1px;top:193.4px" width="20.2" height="4.5"><path d="M0.00 3.25 L1.00 2.81 L2.00 1.79 L3.00 0.83 L4.00 0.57 L5.00 1.16 L6.00 2.23 L7.00 3.09 L8.00 3.18 L9.00 2.44 L10.00 1.36 L11.00 0.62 L12.00 0.71 L13.00 1.57 L14.00 2.64 L15.00 3.23 L16.00 2.97 L17.00 2.01 L18.00 0.99 L19.00 0.55 L20.00 0.99" fill="none" stroke="#ff7474" stroke-width="1.15"/></svg><svg class="sq" style="left:748.1px;top:193.4px" width="31.1" height="4.5"><path d="M0.00 3.25 L1.00 2.81 L2.00 1.79 L3.00 0.83 L4.00 0.57 L5.00 1.16 L6.00 2.23 L7.00 3.09 L8.00 3.18 L9.00 2.44 L10.00 1.36 L11.00 0.62 L12.00 0.71 L13.00 1.57 L14.00 2.64 L15.00 3.23 L16.00 2.97 L17.00 2.01 L18.00 0.99 L19.00 0.55 L20.00 0.99 L21.00 2.01 L22.00 2.97 L23.00 3.23 L24.00 2.64 L25.00 1.57 L26.00 0.71 L27.00 0.62 L28.00 1.36 L29.00 2.44 L30.00 3.18 L31.00 3.09" fill="none" stroke="#ff7474" stroke-width="1.15"/></svg><svg class="sq" style="left:128.5px;top:215.1px" width="31.1" height="4.5"><path d="M0.00 3.25 L1.00 2.81 L2.00 1.79 L3.00 0.83 L4.00 0.57 L5.00 1.16 L6.00 2.23 L7.00 3.09 L8.00 3.18 L9.00 2.44 L10.00 1.36 L11.00 0.62 L12.00 0.71 L13.00 1.57 L14.00 2.64 L15.00 3.23 L16.00 2.97 L17.00 2.01 L18.00 0.99 L19.00 0.55 L20.00 0.99 L21.00 2.01 L22.00 2.97 L23.00 3.23 L24.00 2.64 L25.00 1.57 L26.00 0.71 L27.00 0.62 L28.00 1.36 L29.00 2.44 L30.00 3.18 L31.00 3.09" fill="none" stroke="#ff7474" stroke-width="1.15"/></svg><svg class="sq" style="left:172.0px;top:215.1px" width="9.4" height="4.5"><path d="M0.00 3.25 L1.00 2.81 L2.00 1.79 L3.00 0.83 L4.00 0.57 L5.00 1.16 L6.00 2.23 L7.00 3.09 L8.00 3.18 L9.00 2.44" fill="none" stroke="#ff7474" stroke-width="1.15"/></svg><svg class="sq" style="left:291.5px;top:215.1px" width="42.0" height="4.5"><path d="M0.00 3.25 L1.00 2.81 L2.00 1.79 L3.00 0.83 L4.00 0.57 L5.00 1.16 L6.00 2.23 L7.00 3.09 L8.00 3.18 L9.00 2.44 L10.00 1.36 L11.00 0.62 L12.00 0.71 L13.00 1.57 L14.00 2.64 L15.00 3.23 L16.00 2.97 L17.00 2.01 L18.00 0.99 L19.00 0.55 L20.00 0.99 L21.00 2.01 L22.00 2.97 L23.00 3.23 L24.00 2.64 L25.00 1.57 L26.00 0.71 L27.00 0.62 L28.00 1.36 L29.00 2.44 L30.00 3.18 L31.00 3.09 L32.00 2.23 L33.00 1.16 L34.00 0.57 L35.00 0.83 L36.00 1.79 L37.00 2.81 L38.00 3.25 L39.00 2.81 L40.00 1.79 L41.00 0.83" fill="none" stroke="#ff7474" stroke-width="1.15"/></svg>
<div class="bd" style="top:133.1px"></div><div class="bd" style="top:140.6px"></div><div class="bd" style="top:154.1px"></div><div class="bd" style="top:161.6px"></div><div class="bd" style="top:175.1px"></div><div class="bd" style="top:182.6px"></div><div class="bd" style="top:196.1px"></div><div class="bd" style="top:203.6px"></div><div class="bd" style="top:217.1px"></div><div class="bd" style="top:224.6px"></div><div class="bd" style="top:238.1px"></div><div class="bd" style="top:245.6px"></div><div class="bd" style="top:259.1px"></div><div class="bd" style="top:266.6px"></div><div class="bd" style="top:280.1px"></div><div class="bd" style="top:287.6px"></div><div class="bd" style="top:301.1px"></div><div class="bd" style="top:308.6px"></div><div class="bd" style="top:322.1px"></div><div class="bd" style="top:329.6px"></div><div class="bd" style="top:343.1px"></div><div class="bd" style="top:350.6px"></div><div class="bd" style="top:364.1px"></div><div class="bd" style="top:371.6px"></div>
</body></html>
